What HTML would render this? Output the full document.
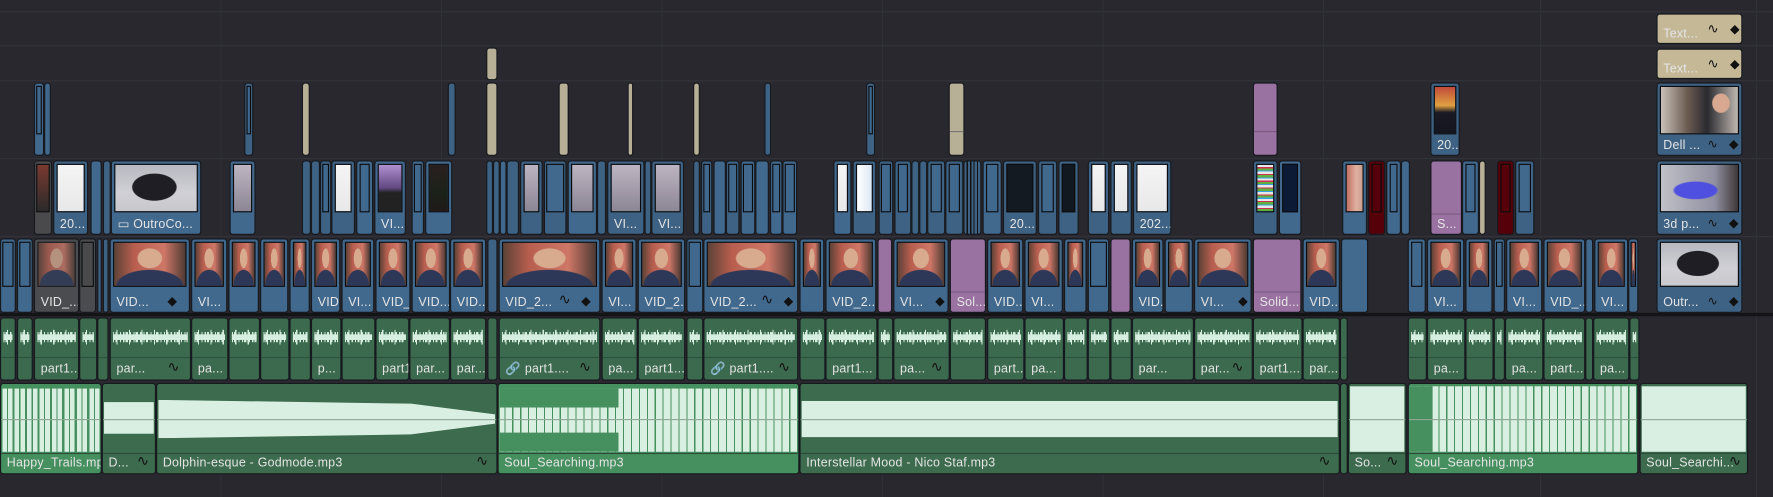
<!DOCTYPE html>
<html><head><meta charset="utf-8">
<style>
html,body{margin:0;padding:0;background:#28282e;overflow:hidden;width:1773px;height:497px}
#w{position:absolute;left:0;top:0;width:1568px;height:440px;transform:scale(1.1307,1.1295);transform-origin:0 0;background:#28282e;font-family:"Liberation Sans",sans-serif}
.hl{position:absolute;left:0;right:0;height:1px;background:#33333b}
.vl{position:absolute;top:0;bottom:0;width:1px;background:#303038}
.c{position:absolute;box-sizing:border-box;border:1px solid #16191e;border-radius:3px;background:#41698e;overflow:hidden}
.d{background:#3e6283}
.V4{top:73px;height:65px}
.V3{top:142px;height:66px}
.V2{top:211px;height:66px}
.t{position:absolute;left:2px;right:2px;top:2px;height:40px;box-sizing:border-box;border:1px solid #0c0c0e;background:#41698e}
.V4 .t{height:43px}
.V3 .t{height:43px}
.p{background:radial-gradient(ellipse 18% 24% at 50% 36%,#d8aa8e 92%,transparent 100%),radial-gradient(ellipse 48% 38% at 50% 100%,#2d3858 95%,transparent 100%),linear-gradient(90deg,#5d4236,#b85e4f 28%,#cf7767 70%,#4e3a33)}
.wh{background:linear-gradient(#f4f4f4,#e8e8e8)}
.mn{background:radial-gradient(ellipse 28% 30% at 48% 48%,#1e1e24 95%,transparent 100%),linear-gradient(#b8b8c0,#d0d0d6 60%,#c8c8cc)}
.dk{background:linear-gradient(#2a2020,#1a2218 60%,#201a18)}
.gy{background:linear-gradient(#bdb5c2,#8c8594)}
.pu{background:#9a72a2}
.tan{background:#b8af97}
.red{background:#560009}
.gr{background:#4a4a4d}
.l{position:absolute;left:5px;bottom:2px;color:#e4e4e4;font-size:11px;white-space:nowrap;letter-spacing:.2px}
.ic{position:absolute;bottom:3px;color:#111;font-size:11px}
.a1{position:absolute;top:281px;height:56px;box-sizing:border-box;border:1px solid #16191e;border-radius:3px;background:#3c6a4e;overflow:hidden}
.a1 .w{position:absolute;left:2px;right:2px;top:10px;height:13px;background:linear-gradient(#d6eee0,#d6eee0) 0 4px/100% 5px no-repeat,repeating-linear-gradient(90deg,#d6eee0 0 1px,transparent 1px 2px,#d6eee0 2px 4px,transparent 4px 6px,#d6eee0 6px 7px,transparent 7px 9px) 0 2px/100% 9px no-repeat,repeating-linear-gradient(90deg,transparent 0 3px,#d6eee0 3px 4px,transparent 4px 11px) 0 0/100% 13px no-repeat}
.a1 .sp{position:absolute;left:0;right:0;top:34px;height:1px;background:#2d5040}
.a1 .l{bottom:3px}
.a2{position:absolute;top:339px;height:81px;box-sizing:border-box;border:1px solid #16191e;border-radius:3px;background:#3c6b4d;overflow:hidden}
.a2 .sp{position:absolute;left:0;right:0;top:61px;height:1px;background:#2b4c3a}
.a2 .cl{position:absolute;left:0;right:0;top:31px;height:1px;background:#8fa898}
.a2 .l{bottom:3px}
.lt{background:#46905f}
.wb{position:absolute;left:1px;right:1px;background:#d8efe2}
</style></head><body><div id="w">
<div class="hl" style="top:10px"></div><div class="hl" style="top:40px"></div><div class="hl" style="top:71px"></div><div class="hl" style="top:140px"></div><div class="hl" style="top:209px"></div>
<div class="vl" style="left:195px"></div><div class="vl" style="left:390px"></div><div class="vl" style="left:585px"></div><div class="vl" style="left:780px"></div><div class="vl" style="left:975px"></div><div class="vl" style="left:1170px"></div><div class="vl" style="left:1362px"></div><div class="vl" style="left:1553px"></div>
<div style="position:absolute;left:0;right:0;top:277px;height:3px;background:#141417"></div>

<div class="c tan" style="left:1465px;top:12px;width:76px;height:27px;background:#c4b897"><div class="l" style="bottom:2px">Text...</div><div class="ic" style="left:44px;bottom:6px;font-size:12px">∿</div><div class="ic" style="left:64px;bottom:6px">◆</div></div>
<div class="c tan" style="left:1465px;top:43px;width:76px;height:27px;background:#c4b897"><div class="l" style="bottom:2px">Text...</div><div class="ic" style="left:44px;bottom:6px;font-size:12px">∿</div><div class="ic" style="left:64px;bottom:6px">◆</div></div>
<div class="c tan" style="left:430px;top:42px;width:10px;height:29px"></div>

<div class="c V4" style="left:30px;width:9px"><div class="t" style="left:1px;right:1px"></div></div>
<div class="c V4" style="left:39px;width:6px"></div>
<div class="c V4 d" style="left:216px;width:8px"><div class="t" style="left:1px;right:1px"></div></div>
<div class="c V4 tan" style="left:267px;width:7px"></div>
<div class="c V4 d" style="left:396px;width:7px"></div>
<div class="c V4 tan" style="left:430px;width:10px"></div>
<div class="c V4 tan" style="left:494px;width:9px"></div>
<div class="c V4 tan" style="left:555px;width:5px"></div>
<div class="c V4 tan" style="left:613px;width:6px"></div>
<div class="c V4 d" style="left:676px;width:6px"></div>
<div class="c V4 d" style="left:766px;width:8px"><div class="t" style="left:1px;right:1px"></div></div>
<div class="c V4 tan" style="left:839px;width:14px"><div style="position:absolute;left:0;right:0;top:42px;height:1px;background:#777"></div></div>
<div class="c V4 pu" style="left:1108px;width:22px"><div style="position:absolute;left:0;right:0;top:42px;height:1px;background:#7a5a80"></div></div>
<div class="c V4 d" style="left:1265px;width:26px"><div class="t" style="background:linear-gradient(#c04a3a,#e0a040 40%,#1a1a24 55%,#151520)"></div><div class="l">20...</div></div>
<div class="c V4 d" style="left:1465px;width:76px"><div class="t" style="background:radial-gradient(ellipse 12% 22% at 78% 35%,#d8a890 90%,transparent 100%),linear-gradient(90deg,#c8c0b8,#6a5a50 35%,#2a2a30 60%,#c0b8b0)"></div><div class="l">Dell ...</div><div class="ic" style="left:44px">∿</div><div class="ic" style="left:63px">◆</div></div>

<div class="c V3 gr" style="left:30px;width:16px"><div class="t" style="left:1px;right:1px;background:linear-gradient(#7a3a30,#2a2a2a)"></div></div>
<div class="c V3 d" style="left:47px;width:31px"><div class="t wh"></div><div class="l">20...</div></div>
<div class="c V3" style="left:80px;width:10px"></div>
<div class="c V3 d" style="left:91px;width:7px"></div>
<div class="c V3" style="left:98px;width:80px"><div class="t mn"></div><div class="l">▭ OutroCo...</div></div>
<div class="c V3" style="left:203px;width:23px"><div class="t gy"></div></div>
<div class="c V3 d" style="left:267px;width:8px"></div><div class="c V3 d" style="left:275px;width:8px"></div>
<div class="c V3 d" style="left:283px;width:10px"><div class="t" style="left:1px;right:1px"></div></div>
<div class="c V3 d" style="left:293px;width:21px"><div class="t wh"></div></div>
<div class="c V3" style="left:315px;width:15px"><div class="t"></div></div>
<div class="c V3" style="left:331px;width:28px"><div class="t" style="background:linear-gradient(#b090d0,#604880 50%,#222 60%)"></div><div class="l">VI...</div></div>
<div class="c V3" style="left:364px;width:11px"><div class="t" style="left:1px;right:1px"></div></div>
<div class="c V3" style="left:376px;width:24px"><div class="t dk"></div></div>
<div class="c V3 d" style="left:430px;width:6px"></div><div class="c V3 d" style="left:436px;width:6px"></div><div class="c V3" style="left:442px;width:6px"></div><div class="c V3 d" style="left:448px;width:11px"></div>
<div class="c V3 d" style="left:460px;width:20px"><div class="t gy"></div></div>
<div class="c V3 d" style="left:481px;width:20px"><div class="t" style="left:1px;right:1px"></div></div>
<div class="c V3" style="left:502px;width:26px"><div class="t gy"></div></div>
<div class="c V3 d" style="left:528px;width:8px"></div>
<div class="c V3 d" style="left:537px;width:33px"><div class="t gy"></div><div class="l">VI...</div></div>
<div class="c V3 d" style="left:570px;width:6px"></div>
<div class="c V3 d" style="left:576px;width:29px"><div class="t gy"></div><div class="l">VI...</div></div>
<div class="c V3 d" style="left:613px;width:6px"></div><div class="c V3 d" style="left:620px;width:10px"><div class="t" style="left:1px;right:1px"></div></div><div class="c V3" style="left:631px;width:11px"></div><div class="c V3 d" style="left:642px;width:12px"><div class="t" style="left:1px;right:1px"></div></div><div class="c V3" style="left:655px;width:13px"><div class="t" style="left:1px;right:1px"></div></div><div class="c V3" style="left:668px;width:12px"></div><div class="c V3" style="left:681px;width:11px"><div class="t" style="left:1px;right:1px"></div></div><div class="c V3" style="left:692px;width:13px"><div class="t" style="left:1px;right:1px"></div></div>
<div class="c V3" style="left:737px;width:16px"><div class="t wh"></div></div>
<div class="c V3 d" style="left:754px;width:21px"><div class="t" style="background:linear-gradient(90deg,#fff,#dde8f5)"></div></div>
<div class="c V3 d" style="left:777px;width:13px"><div class="t" style="left:1px;right:1px"></div></div>
<div class="c V3 d" style="left:791px;width:15px"><div class="t"></div></div>
<div class="c V3 d" style="left:806px;width:7px"></div><div class="c V3 d" style="left:813px;width:7px"></div>
<div class="c V3 d" style="left:820px;width:16px"><div class="t"></div></div>
<div class="c V3 d" style="left:836px;width:16px"><div class="t"></div></div>
<div class="c V3 d" style="left:852px;width:16px;background:repeating-linear-gradient(90deg,#3e6283 0 2px,#111 2px 3px)"></div>
<div class="c V3" style="left:869px;width:17px"><div class="t"></div></div>
<div class="c V3 d" style="left:887px;width:30px"><div class="t" style="background:#141a22"></div><div class="l">20...</div></div>
<div class="c V3 d" style="left:918px;width:17px"><div class="t"></div></div>
<div class="c V3 d" style="left:936px;width:18px"><div class="t" style="background:#121820"></div></div>
<div class="c V3 d" style="left:962px;width:19px"><div class="t wh"></div></div>
<div class="c V3 d" style="left:982px;width:19px"><div class="t wh"></div></div>
<div class="c V3 d" style="left:1002px;width:34px"><div class="t wh"></div><div class="l">202...</div></div>
<div class="c V3 d" style="left:1108px;width:22px"><div class="t" style="background:repeating-linear-gradient(#e8e8e8 0 2px,#d03050 2px 3px,#60b040 3px 5px,#3aa0e0 5px 6px)"></div></div>
<div class="c V3" style="left:1131px;width:20px"><div class="t" style="background:#0c1a36"></div></div>
<div class="c V3" style="left:1187px;width:22px"><div class="t" style="background:linear-gradient(90deg,#c07060,#e0b0a0 60%,#c8a090)"></div></div>
<div class="c V3 red" style="left:1210px;width:15px"><div class="t red" style="left:2px;right:2px"></div></div>
<div class="c V3" style="left:1226px;width:13px"><div class="t" style="left:2px;right:2px"></div></div>
<div class="c V3" style="left:1239px;width:8px"></div>
<div class="c V3 pu" style="left:1265px;width:28px"><div style="position:absolute;left:0;right:0;top:46px;height:1px;background:#7a5a80"></div><div class="l">S...</div></div>
<div class="c V3" style="left:1293px;width:15px"><div class="t" style="left:2px;right:2px"></div></div>
<div class="c V3 tan" style="left:1308px;width:6px"></div>
<div class="c V3 red" style="left:1324px;width:15px"><div class="t red" style="left:2px;right:2px"></div></div>
<div class="c V3 d" style="left:1340px;width:17px"><div class="t d" style="left:2px;right:2px"></div></div>
<div class="c V3 d" style="left:1465px;width:76px"><div class="t" style="background:radial-gradient(ellipse 30% 20% at 45% 55%,#5050e0 90%,transparent 100%),linear-gradient(90deg,#c0c0c8,#9090a0 70%,#403838)"></div><div class="l">3d p...</div><div class="ic" style="left:44px">∿</div><div class="ic" style="left:63px">◆</div></div>

<div class="c V2" style="left:0px;width:14px"><div class="t" style="left:1px;right:1px"></div></div>
<div class="c V2" style="left:15px;width:14px"><div class="t" style="left:1px;right:1px"></div></div>
<div class="c V2 gr" style="left:30px;width:40px;background:#4a4c50"><div class="t p" style="opacity:.75"></div><div class="l">VID_...</div></div>
<div class="c V2 gr" style="left:70px;width:15px;background:#4a4c50"><div class="t gr" style="left:1px;right:1px"></div></div>
<div class="c V2 d" style="left:86px;width:4px"></div><div class="c V2 d" style="left:91px;width:5px"></div>
<div class="c V2" style="left:97px;width:71px"><div class="t p"></div><div class="l">VID...</div><div class="ic" style="left:50px">◆</div></div>
<div class="c V2" style="left:169px;width:32px"><div class="t p"></div><div class="l">VI...</div></div>
<div class="c V2" style="left:202px;width:27px"><div class="t p"></div></div>
<div class="c V2" style="left:230px;width:25px"><div class="t p"></div></div>
<div class="c V2" style="left:256px;width:18px"><div class="t p"></div></div>
<div class="c V2" style="left:275px;width:26px"><div class="t p"></div><div class="l">VID_2...</div></div>
<div class="c V2" style="left:302px;width:29px"><div class="t p"></div><div class="l">VI...</div></div>
<div class="c V2" style="left:332px;width:31px"><div class="t p"></div><div class="l">VID_2...</div></div>
<div class="c V2" style="left:364px;width:34px"><div class="t p"></div><div class="l">VID...</div></div>
<div class="c V2" style="left:398px;width:32px"><div class="t p"></div><div class="l">VID...</div></div>
<div class="c V2 d" style="left:431px;width:9px"></div>
<div class="c V2" style="left:441px;width:90px"><div class="t p"></div><div class="l">VID_2...</div><div class="ic" style="left:52px;font-size:13px">∿</div><div class="ic" style="left:72px">◆</div></div>
<div class="c V2" style="left:532px;width:31px"><div class="t p"></div><div class="l">VI...</div></div>
<div class="c V2" style="left:564px;width:42px"><div class="t p"></div><div class="l">VID_2...</div></div>
<div class="c V2" style="left:607px;width:15px"><div class="t" style="left:1px;right:1px"></div></div>
<div class="c V2" style="left:622px;width:84px"><div class="t p"></div><div class="l">VID_2...</div><div class="ic" style="left:50px;font-size:13px">∿</div><div class="ic" style="left:70px">◆</div></div>
<div class="c V2" style="left:707px;width:22px"><div class="t p"></div></div>
<div class="c V2" style="left:730px;width:45px"><div class="t p"></div><div class="l">VID_2...</div></div>
<div class="c V2 pu" style="left:776px;width:13px"></div>
<div class="c V2" style="left:790px;width:49px"><div class="t p"></div><div class="l">VI...</div><div class="ic" style="left:36px">◆</div></div>
<div class="c V2 pu" style="left:840px;width:32px"><div style="position:absolute;left:0;right:0;top:46px;height:1px;background:#7a5a80"></div><div class="l">Sol...</div></div>
<div class="c V2" style="left:873px;width:32px"><div class="t p"></div><div class="l">VID...</div></div>
<div class="c V2" style="left:906px;width:34px"><div class="t p"></div><div class="l">VI...</div></div>
<div class="c V2" style="left:941px;width:20px"><div class="t p"></div></div>
<div class="c V2" style="left:962px;width:19px"><div class="t" style="left:1px;right:1px"></div></div>
<div class="c V2 pu" style="left:982px;width:18px"></div>
<div class="c V2" style="left:1001px;width:28px"><div class="t p"></div><div class="l">VID...</div></div>
<div class="c V2" style="left:1030px;width:25px"><div class="t p"></div></div>
<div class="c V2" style="left:1056px;width:51px"><div class="t p"></div><div class="l">VI...</div><div class="ic" style="left:38px">◆</div></div>
<div class="c V2 pu" style="left:1108px;width:43px"><div style="position:absolute;left:0;right:0;top:46px;height:1px;background:#7a5a80"></div><div class="l">Solid...</div></div>
<div class="c V2" style="left:1152px;width:33px"><div class="t p"></div><div class="l">VID...</div></div>
<div class="c V2" style="left:1186px;width:24px;background:#416a8e"></div>
<div class="c V2" style="left:1245px;width:16px"><div class="t" style="left:2px;right:2px"></div></div>
<div class="c V2" style="left:1262px;width:33px"><div class="t p"></div><div class="l">VI...</div></div>
<div class="c V2" style="left:1296px;width:24px"><div class="t p"></div></div>
<div class="c V2" style="left:1321px;width:10px"><div class="t" style="left:1px;right:1px"></div></div>
<div class="c V2" style="left:1332px;width:32px"><div class="t p"></div><div class="l">VI...</div></div>
<div class="c V2" style="left:1365px;width:37px"><div class="t p"></div><div class="l">VID_...</div></div>
<div class="c V2" style="left:1402px;width:7px"></div>
<div class="c V2" style="left:1410px;width:30px"><div class="t p"></div><div class="l">VI...</div></div>
<div class="c V2" style="left:1440px;width:9px"><div class="t p" style="left:1px;right:1px"></div></div>
<div class="c V2 d" style="left:1465px;width:76px"><div class="t mn"></div><div class="l">Outr...</div><div class="ic" style="left:44px">∿</div><div class="ic" style="left:63px">◆</div></div>

<div class="a1" style="left:0;width:14px"><div class="w"></div><div class="sp"></div></div>
<div class="a1" style="left:15px;width:14px"><div class="w"></div><div class="sp"></div></div>
<div class="a1" style="left:30px;width:40px"><div class="w"></div><div class="sp"></div><div class="l">part1...</div></div>
<div class="a1" style="left:70px;width:16px"><div class="w"></div><div class="sp"></div></div>
<div class="a1" style="left:86px;width:10px"><div class="sp"></div></div>
<div class="a1" style="left:97px;width:72px"><div class="w"></div><div class="sp"></div><div class="l">par...</div><div class="ic" style="left:50px;font-size:13px">∿</div></div>
<div class="a1" style="left:169px;width:33px"><div class="w"></div><div class="sp"></div><div class="l">pa...</div></div>
<div class="a1" style="left:202px;width:28px"><div class="w"></div><div class="sp"></div></div>
<div class="a1" style="left:230px;width:26px"><div class="w"></div><div class="sp"></div></div>
<div class="a1" style="left:256px;width:19px"><div class="w"></div><div class="sp"></div></div>
<div class="a1" style="left:275px;width:27px"><div class="w"></div><div class="sp"></div><div class="l">p...</div></div>
<div class="a1" style="left:302px;width:30px"><div class="w"></div><div class="sp"></div></div>
<div class="a1" style="left:332px;width:30px"><div class="w"></div><div class="sp"></div><div class="l">part1....</div></div>
<div class="a1" style="left:362px;width:36px"><div class="w"></div><div class="sp"></div><div class="l">par...</div></div>
<div class="a1" style="left:398px;width:32px"><div class="w"></div><div class="sp"></div><div class="l">par...</div></div>
<div class="a1" style="left:431px;width:9px"><div class="sp"></div></div>
<div class="a1" style="left:441px;width:90px"><div class="w"></div><div class="sp"></div><div class="l">🔗 part1....</div><div class="ic" style="left:70px;font-size:13px">∿</div></div>
<div class="a1" style="left:532px;width:32px"><div class="w"></div><div class="sp"></div><div class="l">pa...</div></div>
<div class="a1" style="left:564px;width:42px"><div class="w"></div><div class="sp"></div><div class="l">part1....</div></div>
<div class="a1" style="left:607px;width:15px"><div class="w"></div><div class="sp"></div></div>
<div class="a1" style="left:622px;width:84px"><div class="w"></div><div class="sp"></div><div class="l">🔗 part1....</div><div class="ic" style="left:65px;font-size:13px">∿</div></div>
<div class="a1" style="left:707px;width:23px"><div class="w"></div><div class="sp"></div></div>
<div class="a1" style="left:730px;width:46px"><div class="w"></div><div class="sp"></div><div class="l">part1...</div></div>
<div class="a1" style="left:776px;width:14px"><div class="w"></div><div class="sp"></div></div>
<div class="a1" style="left:790px;width:50px"><div class="w"></div><div class="sp"></div><div class="l">pa...</div><div class="ic" style="left:32px;font-size:13px">∿</div></div>
<div class="a1" style="left:840px;width:32px"><div class="w"></div><div class="sp"></div></div>
<div class="a1" style="left:873px;width:33px"><div class="w"></div><div class="sp"></div><div class="l">part...</div></div>
<div class="a1" style="left:906px;width:35px"><div class="w"></div><div class="sp"></div><div class="l">pa...</div></div>
<div class="a1" style="left:941px;width:21px"><div class="w"></div><div class="sp"></div></div>
<div class="a1" style="left:962px;width:20px"><div class="w"></div><div class="sp"></div></div>
<div class="a1" style="left:982px;width:19px"><div class="w"></div><div class="sp"></div></div>
<div class="a1" style="left:1001px;width:55px"><div class="w"></div><div class="sp"></div><div class="l">par...</div></div>
<div class="a1" style="left:1056px;width:52px"><div class="w"></div><div class="sp"></div><div class="l">par...</div><div class="ic" style="left:32px;font-size:13px">∿</div></div>
<div class="a1" style="left:1108px;width:44px"><div class="w"></div><div class="sp"></div><div class="l">part1...</div></div>
<div class="a1" style="left:1152px;width:33px"><div class="w"></div><div class="sp"></div><div class="l">par...</div></div>
<div class="a1" style="left:1185px;width:7px"><div class="sp"></div></div>
<div class="a1" style="left:1245px;width:17px"><div class="w"></div><div class="sp"></div></div>
<div class="a1" style="left:1262px;width:34px"><div class="w"></div><div class="sp"></div><div class="l">pa...</div></div>
<div class="a1" style="left:1296px;width:25px"><div class="w"></div><div class="sp"></div></div>
<div class="a1" style="left:1321px;width:10px"><div class="w"></div><div class="sp"></div></div>
<div class="a1" style="left:1331px;width:34px"><div class="w"></div><div class="sp"></div><div class="l">pa...</div></div>
<div class="a1" style="left:1365px;width:37px"><div class="w"></div><div class="sp"></div><div class="l">part...</div></div>
<div class="a1" style="left:1402px;width:7px"></div>
<div class="a1" style="left:1409px;width:32px"><div class="w"></div><div class="sp"></div><div class="l">pa...</div></div>
<div class="a1" style="left:1441px;width:9px"><div class="w"></div><div class="sp"></div></div>

<div class="a2 lt" style="left:0;width:90px"><div class="wb" style="top:4px;height:56px;background:repeating-linear-gradient(90deg,#d8efe2 0 4px,#46905f 4px 5px,#d8efe2 5px 9px,#46905f 9px 11px)"></div><div class="cl"></div><div class="sp"></div><div class="l">Happy_Trails.mp3</div></div>
<div class="a2" style="left:90px;width:48px"><div class="wb" style="top:16px;height:28px"></div><div class="cl"></div><div class="sp"></div><div class="l">D...</div><div class="ic" style="left:30px;font-size:13px">∿</div></div>
<div class="a2" style="left:138px;width:302px"><div class="wb" style="top:14px;height:34px;clip-path:polygon(0 0,75% 10%,100% 38%,100% 62%,75% 90%,0 100%)"></div><div class="cl"></div><div class="sp"></div><div class="l">Dolphin-esque - Godmode.mp3</div><div class="ic" style="left:282px;font-size:13px">∿</div></div>
<div class="a2 lt" style="left:440px;width:267px"><div class="wb" style="top:4px;height:56px;background:linear-gradient(#46905f,#46905f) 0 0/40% 30% no-repeat,linear-gradient(#46905f,#46905f) 0 100%/40% 30% no-repeat,repeating-linear-gradient(90deg,#d8efe2 0 4px,#46905f 4px 5px,#d8efe2 5px 7px)"></div><div class="cl"></div><div class="sp"></div><div class="l">Soul_Searching.mp3</div></div>
<div class="a2" style="left:707px;width:478px"><div class="wb" style="top:15px;height:32px"></div><div class="cl"></div><div class="sp"></div><div class="l">Interstellar Mood - Nico Staf.mp3</div><div class="ic" style="left:458px;font-size:13px">∿</div></div>
<div class="a2" style="left:1185px;width:7px"></div>
<div class="a2" style="left:1192px;width:52px"><div class="wb" style="top:2px;height:58px"></div><div class="cl"></div><div class="sp"></div><div class="l">So...</div><div class="ic" style="left:33px;font-size:13px">∿</div></div>
<div class="a2 lt" style="left:1245px;width:204px"><div class="wb" style="top:2px;height:58px;background:linear-gradient(#46905f,#46905f) 0 0/10% 100% no-repeat,repeating-linear-gradient(90deg,#d8efe2 0 4px,#46905f 4px 5px,#d8efe2 5px 7px)"></div><div class="cl"></div><div class="sp"></div><div class="l">Soul_Searching.mp3</div></div>
<div class="a2" style="left:1450px;width:96px"><div class="wb" style="top:2px;height:58px"></div><div class="cl"></div><div class="sp"></div><div class="l">Soul_Searchi...</div><div class="ic" style="left:78px;font-size:13px">∿</div></div>
</div></body></html>
